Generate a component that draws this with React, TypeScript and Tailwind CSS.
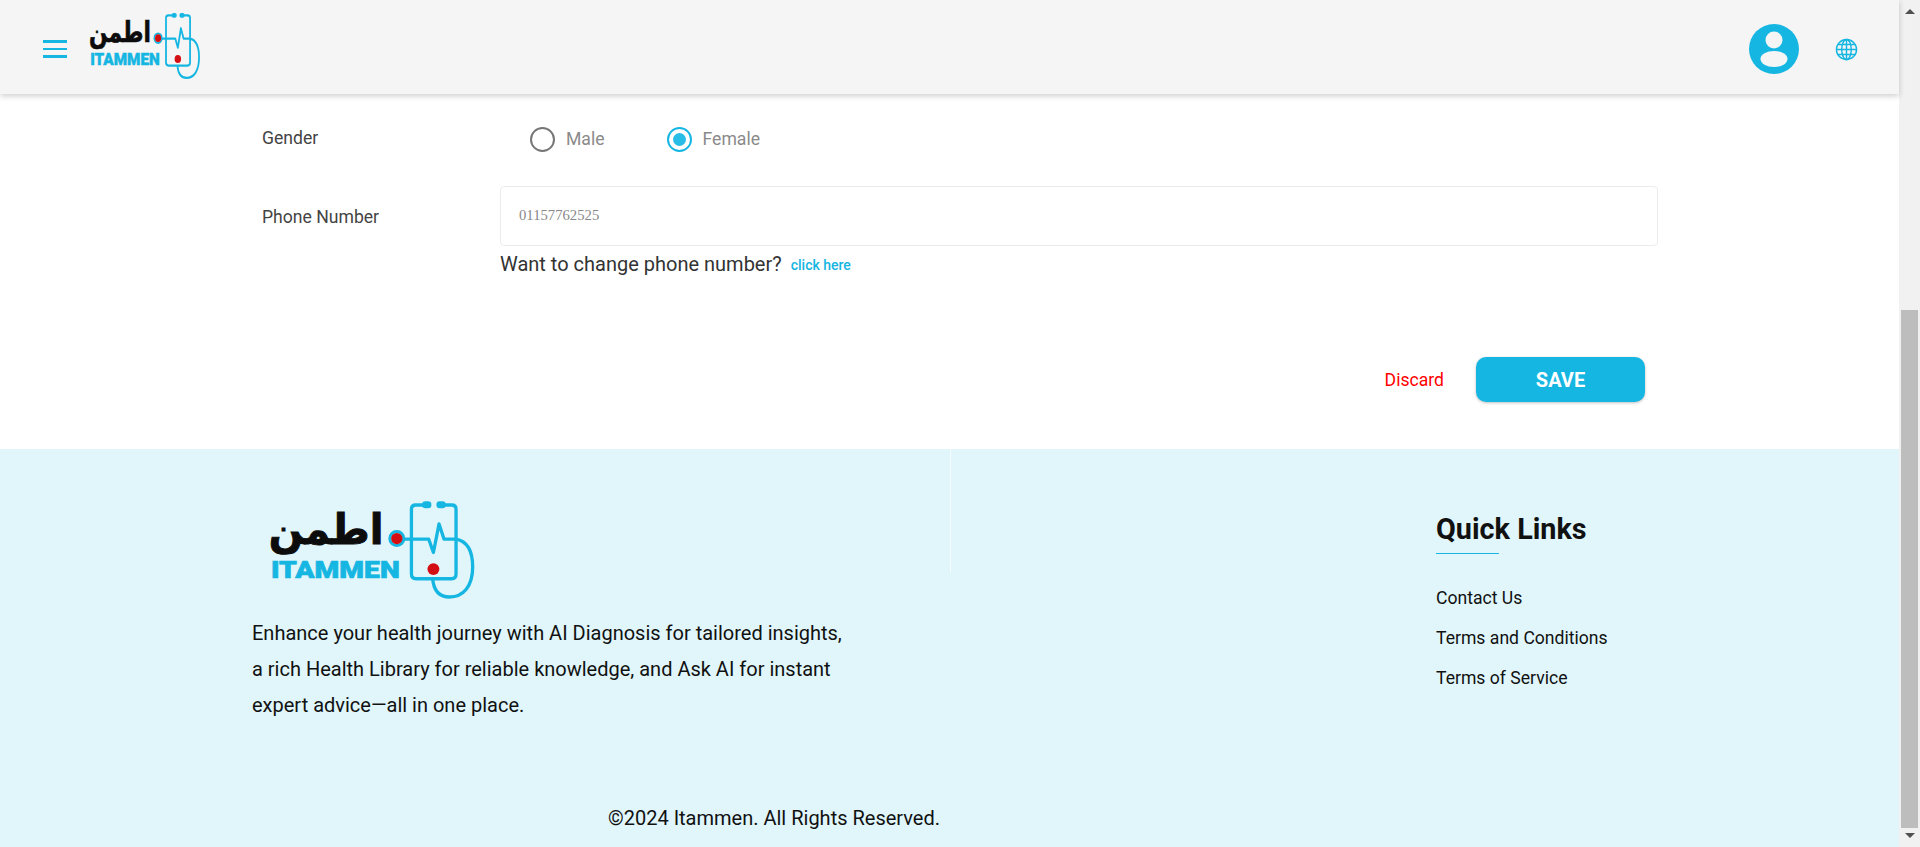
function Logo({ className }: { className?: string }) {
  return (
    <svg viewBox="80 60 640 310" preserveAspectRatio="none" className={className}>
      <g fill="none" stroke="#16b6e2" strokeWidth="10" strokeLinecap="round" strokeLinejoin="round">
        <path d="M548 75H527Q514 75 514 88V283Q514 297 528 297H635Q648 297 648 283V88Q648 75 635 75H615" />
        <path d="M492 178H566L580 218L597 132L612 178H648C685 185 698 220 698 262C698 320 670 352 628 352C600 352 582 335 578 300" />
        <circle cx="470" cy="176" r="21" strokeWidth="9" />
      </g>
      <rect x="546" y="64" width="28" height="21" rx="10" fill="#16b6e2" />
      <rect x="589" y="64" width="28" height="21" rx="10" fill="#16b6e2" />
      <circle cx="470" cy="176" r="17" fill="#d40f14" />
      <circle cx="580" cy="268" r="18" fill="#d40f14" />
      <text
        x="85"
        y="192"
        fontSize="128"
        fontWeight="700"
        fill="#0c0c0c"
        stroke="#0c0c0c"
        strokeWidth="3"
        textLength="345"
        lengthAdjust="spacingAndGlyphs"
        className="font-['DejaVu_Sans',sans-serif]"
      >
        اطمن
      </text>
      <text
        x="92"
        y="296"
        fontSize="72"
        fontWeight="900"
        fill="#16b6e2"
        stroke="#16b6e2"
        strokeWidth="2"
        textLength="387"
        lengthAdjust="spacingAndGlyphs"
        className="font-['Roboto',sans-serif]"
      >
        ITAMMEN
      </text>
    </svg>
  );
}

function Radio({ label, checked }: { label: string; checked?: boolean }) {
  return (
    <div className="flex items-center gap-[11px]">
      <div
        className={
          checked
            ? 'flex h-[25px] w-[25px] items-center justify-center rounded-full border-2 border-[#16b6e2]'
            : 'h-[25px] w-[25px] rounded-full border-2 border-[#777777]'
        }
      >
        {checked && <div className="h-[13px] w-[13px] rounded-full bg-[#28bde6]" />}
      </div>
      <span className="text-[17.6px] text-[#8a8a8a]">{label}</span>
    </div>
  );
}

function Scrollbar() {
  return (
    <div className="flex h-[847px] w-[21px] flex-col items-center bg-[#f1f1f1]">
      <div className="mt-[9px] h-0 w-0 border-x-[5px] border-b-[5px] border-x-transparent border-b-[#505050]" />
      <div className="mt-[296px] h-[518px] w-[17px] bg-[#bdbdbd]" />
      <div className="mt-[5px] h-0 w-0 border-x-[5px] border-t-[5px] border-x-transparent border-t-[#505050]" />
    </div>
  );
}

export default function App() {
  return (
    <div className="flex h-[847px] w-full overflow-hidden bg-white font-['Roboto',sans-serif]">
      <div className="flex w-[1899px] flex-col">
        <header className="relative z-10 flex h-[94px] items-center bg-[#f5f5f5] pl-[43px] pr-[41px] pt-[4px] shadow-[0_2px_6px_rgba(0,0,0,0.2)]">
          <div className="flex w-[24px] flex-col gap-[5px]">
            <div className="h-[2.5px] bg-[#16b6e2]" />
            <div className="h-[2.5px] bg-[#16b6e2]" />
            <div className="h-[2.5px] bg-[#16b6e2]" />
          </div>
          <Logo className="ml-[21px] mt-[-4px] h-[70px] w-[115px]" />
          <div className="ml-auto flex items-center gap-[36px]">
            <svg viewBox="0 0 50 50" className="h-[50px] w-[50px]">
              <circle cx="25" cy="25" r="25" fill="#16b6e2" />
              <circle cx="25" cy="16" r="8.5" fill="#f5f5f5" />
              <ellipse cx="25" cy="35" rx="13.5" ry="8" fill="#f5f5f5" />
            </svg>
            <svg viewBox="0 0 24 24" fill="none" stroke="#16b6e2" strokeWidth="1.5" className="h-[23px] w-[23px]">
              <circle cx="12" cy="12" r="10.5" />
              <ellipse cx="12" cy="12" rx="5" ry="10.5" />
              <path d="M12 1.5V22.5M1.5 12H22.5M3 6.8H21M3 17.2H21" />
            </svg>
          </div>
        </header>

        <main className="h-[355px] bg-white">
          <div className="flex h-[92px] items-start pt-[32px]">
            <div className="ml-[262px] w-[268px] text-[17.6px] leading-[24px] text-[#444444]">Gender</div>
            <div className="flex gap-[62px]">
              <Radio label="Male" />
              <Radio label="Female" checked />
            </div>
          </div>
          <div className="flex">
            <div className="ml-[262px] w-[238px] pt-[19px] text-[17.6px] leading-[24px] text-[#444444]">Phone Number</div>
            <div className="w-[1158px]">
              <div className="flex h-[60px] items-center rounded-[4px] border border-[#ececec] pb-[2px] pl-[18px] font-['Liberation_Serif',serif] text-[14.7px] text-[#888888]">
                01157762525
              </div>
              <div className="mt-[5px] flex items-center gap-[9px]">
                <span className="text-[20px] leading-[26px] text-[#333333]">Want to change phone number?</span>
                <span className="mt-[3px] text-[14px] font-medium text-[#16b6e2]">click here</span>
              </div>
            </div>
          </div>
          <div className="mt-[80px] flex items-center justify-end pr-[254px]">
            <span className="mt-[1px] text-[17.6px] text-[#ff0000]">Discard</span>
            <button className="ml-[32px] h-[45px] w-[169px] rounded-[10px] bg-[#16b6e2] text-[20px] font-bold text-white shadow-[0_1px_3px_rgba(0,0,0,0.25)]">
              SAVE
            </button>
          </div>
        </main>

        <footer className="flex-1 bg-[#e0f6fb]">
          <div className="flex h-[355px] items-start">
            <div className="w-[950px] pl-[252px] pt-[51px]">
              <Logo className="ml-[15px] h-[103px] w-[213px]" />
              <p className="mt-[12px] w-[600px] text-[20px] leading-[36px] text-[#111111]">
                Enhance your health journey with AI Diagnosis for tailored insights, a rich Health Library for reliable
                knowledge, and Ask AI for instant expert advice—all in one place.
              </p>
            </div>
            <div className="h-[124px] w-px bg-[#f6fcfe]" />
            <div className="ml-[485px] pt-[60px]">
              <h3 className="text-[28.8px] font-bold leading-[40px] text-[#111111]">Quick Links</h3>
              <div className="mt-[4px] h-px w-[63px] bg-[#16b6e2]" />
              <ul className="mt-[32px] flex flex-col gap-[16px] text-[17.6px] leading-[24px] text-[#111111]">
                <li>Contact Us</li>
                <li>Terms and Conditions</li>
                <li>Terms of Service</li>
              </ul>
            </div>
          </div>
          <div className="pl-[608px] text-[20px] leading-[28px] text-[#111111]">©2024 Itammen. All Rights Reserved.</div>
        </footer>
      </div>
      <Scrollbar />
    </div>
  );
}
